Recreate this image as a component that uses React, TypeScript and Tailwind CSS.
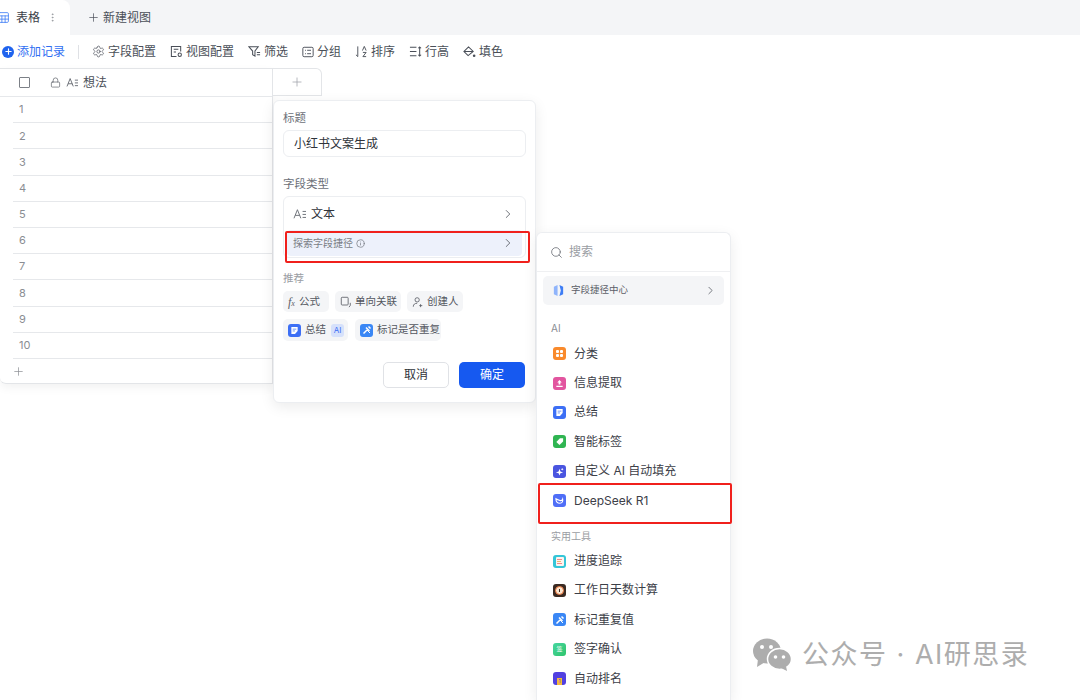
import type { ReactNode } from "react";
import {
  ArrowDownUp,
  ChevronRight,
  Info,
  Lock,
  MoreVertical,
  Plus,
  Search,
  Settings,
  Sheet,
} from "lucide-react";

const FONT = "font-['Inter','Noto_Sans_CJK_SC',sans-serif]";

function TextTypeIcon({ className }: { className?: string }) {
  return (
    <svg viewBox="0 0 16 14" fill="none" stroke="currentColor" strokeWidth="1.1" className={className}>
      <path d="M1 12 5 2l4 10M2.4 8.6h5.2" />
      <path d="M11 4h4M11 7.5h4M11 11h4" />
    </svg>
  );
}

function ViewConfigIcon() {
  return (
    <svg viewBox="0 0 14 14" fill="none" stroke="currentColor" strokeWidth="1.1" className="h-[13px] w-[13px]">
      <path d="M7 12.5H1.5v-11h10V7M4 4.5h5M4 7.5h2.5" />
      <circle cx="10.5" cy="10.5" r="1.8" />
    </svg>
  );
}

function FilterIcon() {
  return (
    <svg viewBox="0 0 14 14" fill="none" stroke="currentColor" strokeWidth="1.1" className="h-[13px] w-[13px]">
      <path d="M1 2h10L7.5 6.5V12L5 10.5v-4zM9.5 8h3.5M9.5 10.5h3.5" />
    </svg>
  );
}

function GroupIcon() {
  return (
    <svg viewBox="0 0 14 14" fill="none" stroke="currentColor" strokeWidth="1.1" className="h-[12px] w-[12px]">
      <rect x="1" y="1.5" width="12" height="11" rx="1.5" />
      <path d="M3.5 5h1M6 5h4.5M3.5 9h1M6 9h4.5" />
    </svg>
  );
}

function SortIcon() {
  return (
    <svg viewBox="0 0 14 14" fill="none" stroke="currentColor" strokeWidth="1" className="h-[13px] w-[13px]">
      <path d="M3 1.5v11M1 10.5l2 2M8 6l2-4.5L12 6M8.5 8h3.5l-3.5 4.5H12" />
    </svg>
  );
}

function RowHeightIcon() {
  return (
    <svg viewBox="0 0 14 14" fill="none" stroke="currentColor" strokeWidth="1.1" className="h-[13px] w-[13px]">
      <path d="M1 2.5h7M1 7h7M1 11.5h7M11.5 2v10M10 3.5 11.5 2 13 3.5M10 10.5l1.500 1.500 1.500-1.500" />
    </svg>
  );
}

function FillIcon() {
  return (
    <svg viewBox="0 0 14 14" fill="none" className="h-[13px] w-[13px]">
      <path d="M6 2 1 7l4.500 4.500L11 7zM1 7h10" stroke="currentColor" strokeWidth="1.1" />
      <circle cx="12" cy="11.500" r="1.400" fill="currentColor" />
    </svg>
  );
}

function Tool({ icon, label }: { icon: ReactNode; label: string }) {
  return (
    <div className="flex items-center gap-[3px] text-[12px] text-[#4a4f58]">
      {icon}
      <span>{label}</span>
    </div>
  );
}

function Tile({ className, children }: { className: string; children?: ReactNode }) {
  return (
    <span className={`flex h-[13px] w-[13px] shrink-0 items-center justify-center rounded-[3px] ${className}`}>
      {children}
    </span>
  );
}

function DocGlyph() {
  return (
    <svg viewBox="0 0 10 10" className="h-[9px] w-[9px]" fill="white">
      <path d="M1.500 1h7v4.500L5.500 9h-4z" />
      <path d="M3 3.500h4M3 5.500h2.500" stroke="#3d6ff5" strokeWidth="0.8" />
    </svg>
  );
}

function PinGlyph() {
  return (
    <svg viewBox="0 0 10 10" className="h-[10px] w-[10px]" fill="none" stroke="white" strokeWidth="1.500">
      <path d="M1.500 8.500 5 5M4 2.500l3.500 3.500M6.500 1.500l2 2" />
      <path d="M5 5 8 8" strokeWidth="1" />
    </svg>
  );
}

function MenuItem({ tile, label }: { tile: ReactNode; label: string }) {
  return (
    <div className="flex h-[29.4px] items-center gap-[8px] pl-[16px] text-[12px] text-[#3c4048]">
      {tile}
      <span>{label}</span>
    </div>
  );
}

function Chip({ children, className = "" }: { children: ReactNode; className?: string }) {
  return (
    <div className={`flex h-[21px] items-center rounded-[5px] bg-[#f4f5f7] text-[10.5px] text-[#53575f] ${className}`}>
      {children}
    </div>
  );
}

function FieldPopover() {
  return (
    <div className="absolute left-[273px] top-[100px] h-[303px] w-[263px] rounded-[6px] border border-[#eceef1] bg-white px-[9px] pt-[10px] shadow-[0_4px_14px_rgba(0,0,0,0.08)]">
      <div className="text-[11.500px] leading-[15px] text-[#6c7078]">标题</div>
      <div className="mt-[4px] flex h-[27px] w-[243px] items-center rounded-[6px] border border-[#eceef1] px-[10px] text-[12px] text-[#2f333a]">
        小红书文案生成
      </div>
      <div className="mt-[20px] text-[11.500px] leading-[15px] text-[#6c7078]">字段类型</div>
      <div className="mt-[4px] h-[62px] w-[243px] rounded-[6px] border border-[#eceef1]">
        <div className="flex h-[33px] items-center pl-[9px] pr-[10px] text-[12px] text-[#2f333a]">
          <TextTypeIcon className="h-[12px] w-[14px] text-[#6a6e76]" />
          <span className="ml-[4px]">文本</span>
          <ChevronRight className="ml-auto h-[14px] w-[14px] text-[#5c6068]" strokeWidth={1.500} />
        </div>
        <div className="mx-[3px] flex h-[26px] items-center rounded-[4px] bg-[#edf1fb] pl-[6px] pr-[7px] text-[10px] text-[#7a7e86]">
          <span>探索字段捷径</span>
          <Info className="ml-[3px] h-[9px] w-[9px]" />
          <ChevronRight className="ml-auto h-[14px] w-[14px] text-[#5c6068]" strokeWidth={1.500} />
        </div>
      </div>
      <div className="mt-[14px] text-[10.500px] leading-[14px] text-[#9a9da3]">推荐</div>
      <div className="mt-[5px] flex gap-[6px]">
        <Chip className="w-[46px] pl-[5px]">
          <span className="mr-[4px] text-[12px] italic text-[#5c6068] font-['Liberation_Serif',serif]">f<span className="text-[8px]">x</span></span>
          公式
        </Chip>
        <Chip className="w-[66px] pl-[5px]">
          <svg viewBox="0 0 14 14" fill="none" stroke="#5c6068" strokeWidth="1" className="mr-[3px] h-[12px] w-[12px]">
            <rect x="1.500" y="1.500" width="8" height="9" rx="1" />
            <path d="M12 8v3l-1.500 2" />
          </svg>
          单向关联
        </Chip>
        <Chip className="w-[56px] pl-[5px]">
          <svg viewBox="0 0 14 14" fill="none" stroke="#5c6068" strokeWidth="1" className="mr-[3px] h-[12px] w-[12px]">
            <circle cx="6" cy="4.500" r="2.500" />
            <path d="M1.500 12.500c0-3 2-4 4.500-4M10 9.500v3.500M8.500 11.200h3.500" />
          </svg>
          创建人
        </Chip>
      </div>
      <div className="mt-[7px] flex gap-[7px]">
        <Chip className="h-[22px] w-[65px] pl-[5px]">
          <Tile className="bg-[#3d6ff5]"><DocGlyph /></Tile>
          <span className="ml-[4px]">总结</span>
          <span className="ml-[5px] flex h-[13px] w-[13px] items-center justify-center rounded-[3px] bg-[#d6e1fb] text-[8px] text-[#3d6ff5]">AI</span>
        </Chip>
        <Chip className="h-[22px] w-[86px] pl-[5px]">
          <Tile className="bg-[#3a87f5]"><PinGlyph /></Tile>
          <span className="ml-[4px]">标记是否重复</span>
        </Chip>
      </div>
      <div className="mt-[21px] flex justify-end gap-[10px] pr-[1px]">
        <button className="h-[26px] w-[66px] rounded-[5px] border border-[#e0e2e6] bg-white text-[12px] text-[#2f333a]">取消</button>
        <button className="h-[26px] w-[66px] rounded-[5px] bg-[#1659f0] text-[12px] text-white">确定</button>
      </div>
    </div>
  );
}

function ShortcutPopover() {
  return (
    <div className="absolute left-[536px] top-[232px] h-[468px] w-[195px] overflow-hidden rounded-t-[6px] border-x border-t border-[#eceef1] bg-white shadow-[0_4px_14px_rgba(0,0,0,0.08)]">
      <div className="flex h-[39px] items-center gap-[6px] border-b border-[#eff0f2] pl-[13px] text-[12px] text-[#9a9da3]">
        <Search className="h-[13px] w-[13px] text-[#6c7078]" strokeWidth={1.500} />
        <span>搜索</span>
      </div>
      <div className="mx-[6px] mt-[4px] flex h-[29px] items-center rounded-[5px] bg-[#f4f5f7] pl-[9px] pr-[7px] text-[9.500px] text-[#5c6068]">
        <svg viewBox="0 0 14 14" className="mr-[6px] h-[13px] w-[13px]">
          <path d="M6 1 2 3v8l4 2z" fill="#8fb4fb" />
          <path d="M8 1l4 2v8l-4 2 1.500-6z" fill="#3d7df5" />
        </svg>
        <span>字段捷径中心</span>
        <ChevronRight className="ml-auto h-[13px] w-[13px] text-[#5c6068]" strokeWidth={1.500} />
      </div>
      <div className="mt-[16px] pl-[14px] text-[10px] leading-[14px] text-[#8a8d93]">AI</div>
      <div className="mt-[4px]">
        <MenuItem label="分类" tile={
          <Tile className="bg-[#f98a2c]">
            <span className="grid grid-cols-2 gap-[1px]">
              <span className="h-[3px] w-[3px] rounded-[1px] bg-white" />
              <span className="h-[3px] w-[3px] rounded-[1px] bg-white" />
              <span className="h-[3px] w-[3px] rounded-[1px] bg-white" />
              <span className="h-[3px] w-[3px] rounded-[1px] bg-white" />
            </span>
          </Tile>
        } />
        <MenuItem label="信息提取" tile={
          <Tile className="bg-[#e2559f]">
            <svg viewBox="0 0 10 10" className="h-[9px] w-[9px]" fill="white">
              <path d="M5 1 7.500 4H6v2H4V4H2.500zM1.500 7.500h7V9h-7z" />
            </svg>
          </Tile>
        } />
        <MenuItem label="总结" tile={<Tile className="bg-[#3d6ff5]"><DocGlyph /></Tile>} />
        <MenuItem label="智能标签" tile={
          <Tile className="bg-[#30b552]">
            <svg viewBox="0 0 10 10" className="h-[9px] w-[9px]" fill="white">
              <path d="M5.500 1.500H9V5L5 9 1.500 5.500z" />
            </svg>
          </Tile>
        } />
        <MenuItem label="自定义 AI 自动填充" tile={
          <Tile className="bg-[#4a55e0]">
            <svg viewBox="0 0 10 10" className="h-[9px] w-[9px]" fill="white">
              <path d="M5 2 6 5l3 1-3 1-1 2.500L4 7 1 6l3-1zM8 1l.5 1 1 .5-1 .5L8 4l-.5-1-1-.5 1-.5z" />
            </svg>
          </Tile>
        } />
        <MenuItem label="DeepSeek R1" tile={
          <Tile className="bg-[#4f6ef7]">
            <svg viewBox="0 0 10 10" className="h-[9px] w-[9px]" fill="none" stroke="white" strokeWidth="1.200">
              <path d="M1 3c0 3 2 5 4.500 5S9 6 8.500 3.500C8 5 7 5.500 5.500 5 4 4.500 2.500 4 1 3z" />
            </svg>
          </Tile>
        } />
      </div>
      <div className="mt-[14px] pl-[14px] text-[10px] leading-[14px] text-[#9a9da3]">实用工具</div>
      <div className="mt-[3px]">
        <MenuItem label="进度追踪" tile={
          <Tile className="bg-[#35c6d8]">
            <span className="flex h-[9px] w-[8px] flex-col justify-center gap-[1px] rounded-[1px] bg-[#fdf3ee] pl-[1px]">
              <span className="h-[1px] w-[5px] bg-[#f08a8a]" />
              <span className="h-[1px] w-[4px] bg-[#f2b76b]" />
              <span className="h-[1px] w-[5px] bg-[#f08a8a]" />
            </span>
          </Tile>
        } />
        <MenuItem label="工作日天数计算" tile={
          <Tile className="bg-[#3a2a22]">
            <span className="flex h-[9px] w-[9px] items-center justify-center rounded-full border border-[#e8743b] bg-[#fbe6d0]">
              <span className="h-[3px] w-[1px] bg-[#3a2a22]" />
            </span>
          </Tile>
        } />
        <MenuItem label="标记重复值" tile={<Tile className="bg-[#3a87f5]"><PinGlyph /></Tile>} />
        <MenuItem label="签字确认" tile={
          <Tile className="bg-gradient-to-br from-[#46d6a0] to-[#2fc46a]">
            <span className="text-[6px] leading-none text-white">签</span>
          </Tile>
        } />
        <MenuItem label="自动排名" tile={
          <Tile className="bg-[#5140e0]">
            <span className="mt-[5px] flex h-[7px] w-[5px] items-center justify-center bg-[#f5b93a] text-[5px] leading-none text-[#5140e0]">1</span>
          </Tile>
        } />
      </div>
    </div>
  );
}

export default function App() {
  const rows = [1, 2, 3, 4, 5, 6, 7, 8, 9, 10];
  return (
    <div className={`relative h-[700px] w-[1080px] overflow-hidden bg-white ${FONT}`}>
      <div className="flex h-[35px] bg-[#f4f5f7]">
        <div className="flex h-full w-[70px] items-center rounded-tr-[8px] bg-white pl-0 text-[12px] text-[#3c4048]">
          <Sheet className="ml-[-3px] h-[13px] w-[13px] text-[#3d7df5]" strokeWidth={1.500} />
          <span className="ml-[6px]">表格</span>
          <MoreVertical className="ml-[7px] h-[11px] w-[11px] text-[#8a8d93]" strokeWidth={1.500} />
        </div>
        <div className="ml-[17px] flex items-center gap-[3px] text-[12px] text-[#4a4f58]">
          <Plus className="h-[13px] w-[13px]" strokeWidth={1.300} />
          <span>新建视图</span>
        </div>
      </div>

      <div className="flex h-[33px] items-center pl-[2px]">
        <div className="flex items-center gap-[3px] text-[12px] text-[#2f6ef2]">
          <span className="flex h-[12px] w-[12px] items-center justify-center rounded-full bg-[#1f63ee]">
            <Plus className="h-[9px] w-[9px] text-white" strokeWidth={3} />
          </span>
          <span>添加记录</span>
        </div>
        <div className="ml-[13px] h-[14px] w-px bg-[#dfe1e5]" />
        <div className="ml-[13px] flex items-center gap-[14px]">
          <Tool icon={<Settings className="h-[13px] w-[13px]" strokeWidth={1.300} />} label="字段配置" />
          <Tool icon={<ViewConfigIcon />} label="视图配置" />
          <Tool icon={<FilterIcon />} label="筛选" />
          <Tool icon={<GroupIcon />} label="分组" />
          <Tool icon={<SortIcon />} label="排序" />
          <Tool icon={<RowHeightIcon />} label="行高" />
          <Tool icon={<FillIcon />} label="填色" />
        </div>
      </div>

      <div className="flex items-start">
        <div className="h-[316px] w-[273px] rounded-bl-[6px] border-b border-r border-t border-[#e3e5e8] bg-white shadow-[0_4px_10px_rgba(0,0,0,0.05)]">
          <div className="flex h-[28px] items-center border-b border-[#e6e8eb] pl-[19px] text-[12px] text-[#4a4f58]">
            <span className="h-[11px] w-[11px] rounded-[1px] border border-[#7c8087]" />
            <Lock className="ml-[20px] h-[11px] w-[11px] text-[#5c6068]" strokeWidth={1.500} />
            <TextTypeIcon className="ml-[5px] h-[11px] w-[13px] text-[#5c6068]" />
            <span className="ml-[4px]">想法</span>
          </div>
          {rows.map((n) => (
            <div key={n} className="ml-[13px] flex h-[26.200px] items-center border-b border-[#e6e8eb] pl-[6px] text-[11px] text-[#8a8d93]">
              {n}
            </div>
          ))}
          <div className="flex h-[25px] items-center pl-[12px]">
            <Plus className="h-[13px] w-[13px] text-[#8a8d93]" strokeWidth={1.300} />
          </div>
        </div>
        <div className="flex h-[28px] w-[49px] items-center justify-center rounded-tr-[6px] border-b border-r border-t border-[#e3e5e8] bg-white">
          <Plus className="h-[14px] w-[14px] text-[#a0a3a9]" strokeWidth={1.300} />
        </div>
      </div>

      <FieldPopover />
      <ShortcutPopover />

      <div className="absolute left-[285px] top-[231px] h-[32px] w-[245px] rounded-[2px] border-[2px] border-[#f0201c]" />
      <div className="absolute left-[538px] top-[483px] h-[41px] w-[194px] rounded-[2px] border-[2px] border-[#f0201c]" />

      <div className="absolute left-[752px] top-[638px] flex items-center text-[#adadad]">
        <svg viewBox="0 0 40 34" className="h-[34px] w-[40px]" fill="currentColor">
          <ellipse cx="15" cy="13" rx="14" ry="12.500" />
          <path d="M6 21 5 29l8-5z" />
          <ellipse cx="27.500" cy="21" rx="12" ry="10.500" stroke="white" strokeWidth="1.500" />
          <path d="M34 28l1 5-6-3z" />
          <circle cx="10" cy="9" r="2" fill="white" />
          <circle cx="19" cy="9" r="2" fill="white" />
          <circle cx="23.500" cy="19" r="1.800" fill="white" />
          <circle cx="31.500" cy="19" r="1.800" fill="white" />
        </svg>
        <span className="ml-[10px] text-[27px] leading-[34px] tracking-[1.500px]">公众号 · AI研思录</span>
      </div>
    </div>
  );
}
